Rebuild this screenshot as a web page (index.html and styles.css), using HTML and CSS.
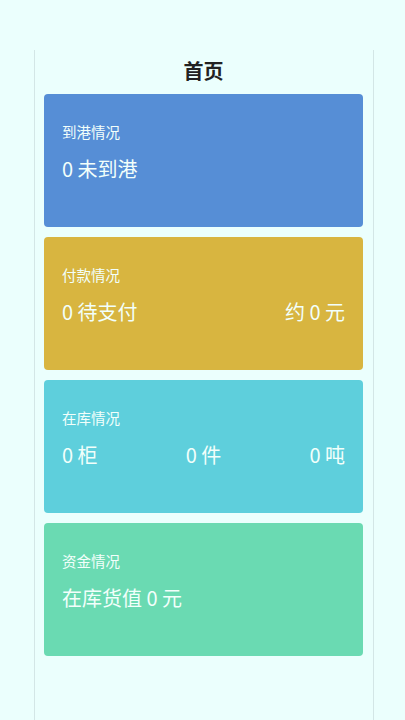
FILE: index.html
```html
<!DOCTYPE html>
<html lang="zh-CN">
<head>
<meta charset="utf-8">
<title>首页</title>
<link rel="stylesheet" href="styles.css">
</head>
<body>
<div class="page">
  <h1 class="title">首页</h1>
  <div class="cards">
    <div class="card card-blue">
      <div class="label">到港情况</div>
      <div class="values"><span>0 未到港</span></div>
    </div>
    <div class="card card-gold">
      <div class="label">付款情况</div>
      <div class="values"><span>0 待支付</span><span>约 0 元</span></div>
    </div>
    <div class="card card-cyan">
      <div class="label">在库情况</div>
      <div class="values"><span>0 柜</span><span>0 件</span><span>0 吨</span></div>
    </div>
    <div class="card card-green">
      <div class="label">资金情况</div>
      <div class="values"><span>在库货值 0 元</span></div>
    </div>
  </div>
</div>
</body>
</html>
```
FILE: styles.css
```css
html, body {
  margin: 0;
  padding: 0;
  background: #ebfffd;
  font-family: "Noto Sans CJK SC", "Noto Sans", "Liberation Sans", sans-serif;
}
.page {
  box-sizing: border-box;
  width: 340px;
  margin: 50px 0 0 34px;
  min-height: calc(100vh - 50px);
  border-left: 1px solid #d3e6e6;
  border-right: 1px solid #d3e6e6;
  padding: 0 10px 0 9px;
}
.title {
  margin: 0;
  height: 44px;
  line-height: 42px;
  text-align: center;
  font-size: 20px;
  font-weight: bold;
  color: #222;
}
.cards {
  display: flex;
  flex-direction: column;
  gap: 10px;
}
.card {
  box-sizing: border-box;
  height: 133px;
  border-radius: 4px;
  padding: 28px 18px 0 18px;
  color: #f2fffb;
}
.card-blue { background: #568ed6; }
.card-gold { background: #d8b540; }
.card-cyan { background: #5ecfdc; }
.card-green { background: #6adab2; }
.label {
  font-size: 14.5px;
  line-height: 20px;
}
.values {
  margin-top: 13px;
  display: flex;
  justify-content: space-between;
  font-size: 20px;
  line-height: 28px;
}
```
